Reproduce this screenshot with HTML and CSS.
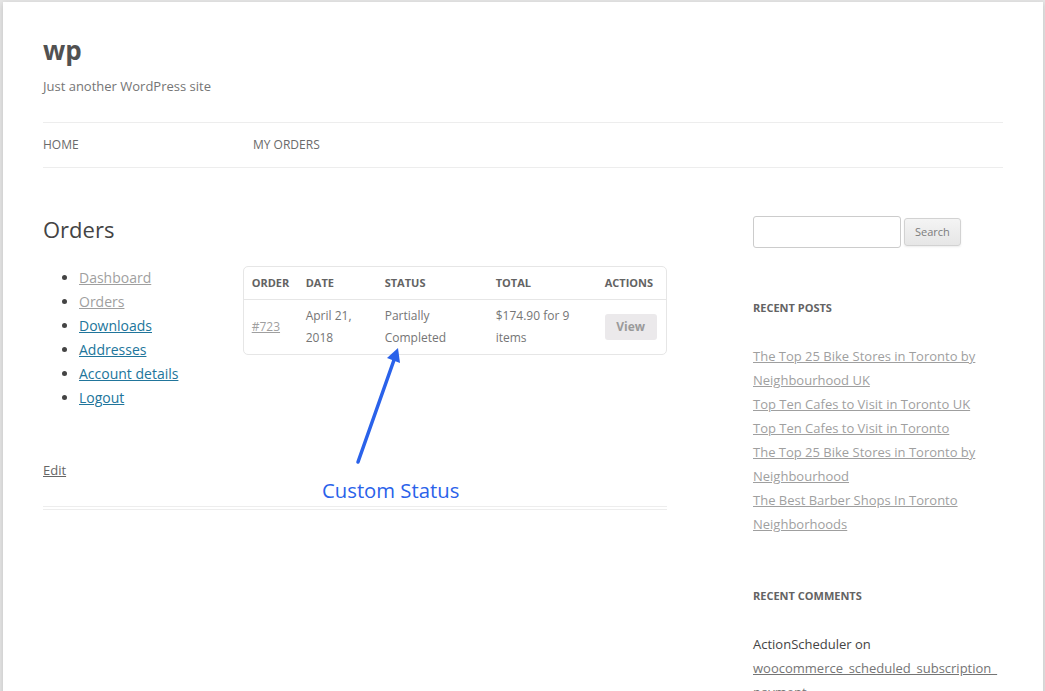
FILE: index.html
```html
<!DOCTYPE html>
<html lang="en">
<head>
<meta charset="utf-8">
<title>Orders – wp</title>
<link rel="stylesheet" href="styles.css">
</head>
<body>
<div class="site">
  <header class="site-header">
    <h1 class="site-title"><a href="#">wp</a></h1>
    <h2 class="site-description">Just another WordPress site</h2>
    <nav class="main-nav">
      <ul class="menu">
        <li class="menu-item menu-item-home"><a href="#">Home</a></li>
        <li class="menu-item"><a href="#">My Orders</a></li>
      </ul>
    </nav>
  </header>

  <div class="site-main">
    <main class="site-content">
      <article class="page">
        <h1 class="entry-title">Orders</h1>
        <div class="entry-content">
          <div class="account">
            <nav class="account-nav">
              <ul>
                <li><a class="visited" href="#">Dashboard</a></li>
                <li><a class="visited" href="#">Orders</a></li>
                <li><a href="#">Downloads</a></li>
                <li><a href="#">Addresses</a></li>
                <li><a href="#">Account details</a></li>
                <li><a href="#">Logout</a></li>
              </ul>
            </nav>
            <div class="account-content">
              <table class="orders-table">
                <colgroup>
                  <col class="col-order">
                  <col class="col-date">
                  <col class="col-status">
                  <col class="col-total">
                  <col class="col-actions">
                </colgroup>
                <thead>
                  <tr>
                    <th>Order</th>
                    <th>Date</th>
                    <th>Status</th>
                    <th>Total</th>
                    <th>Actions</th>
                  </tr>
                </thead>
                <tbody>
                  <tr>
                    <td><a class="visited" href="#">#723</a></td>
                    <td>April 21, 2018</td>
                    <td>Partially Completed</td>
                    <td>$174.90 for 9 items</td>
                    <td><a class="button" href="#">View</a></td>
                  </tr>
                </tbody>
              </table>
            </div>
          </div>
        </div>
        <footer class="entry-meta">
          <a class="edit-link" href="#">Edit</a>
        </footer>

        <div class="callout">
          <svg class="callout-arrow" width="80" height="130" viewBox="0 0 80 130">
            <line x1="18" y1="122" x2="54" y2="20" stroke="#2a62ea" stroke-width="3.5" stroke-linecap="round"/>
            <polygon points="58,8 60,23 47,18" fill="#2a62ea"/>
          </svg>
          <span class="callout-label">Custom Status</span>
        </div>
      </article>
    </main>

    <aside class="widget-area">
      <section class="widget widget-search">
        <form class="search-form">
          <input class="search-field" type="text" aria-label="Search for">
          <button class="search-submit" type="button">Search</button>
        </form>
      </section>

      <section class="widget">
        <h3 class="widget-title">Recent Posts</h3>
        <ul class="widget-list">
          <li><a href="#">The Top 25 Bike Stores in Toronto by Neighbourhood UK</a></li>
          <li><a href="#">Top Ten Cafes to Visit in Toronto UK</a></li>
          <li><a href="#">Top Ten Cafes to Visit in Toronto</a></li>
          <li><a href="#">The Top 25 Bike Stores in Toronto by Neighbourhood</a></li>
          <li><a href="#">The Best Barber Shops In Toronto Neighborhoods</a></li>
        </ul>
      </section>

      <section class="widget">
        <h3 class="widget-title">Recent Comments</h3>
        <ul class="widget-list comments">
          <li>ActionScheduler on <a class="comment-link" href="#">woocommerce_scheduled_subscription_<wbr>payment</a></li>
        </ul>
      </section>
    </aside>
  </div>
</div>
</body>
</html>
```

FILE: styles.css
```css
html, body {
  margin: 0;
  padding: 0;
}

body {
  background: #e6e6e6;
  font-family: "Open Sans", "Liberation Sans", sans-serif;
  font-size: 14px;
  line-height: 24px;
  color: #444;
  overflow: hidden;
  height: 691px;
}

a {
  color: #21759b;
}

ul {
  margin: 0;
  padding: 0;
}

/* Page sheet */
.site {
  background: #fff;
  margin: 2px 2px 0 3px;
  padding: 0 40px;
  min-height: 700px;
  box-shadow: 0 2px 6px rgba(100, 100, 100, 0.3);
}

/* Header */
.site-header {
  padding: 24px 0;
}

.site-title {
  margin: 0;
  font-size: 26px;
  line-height: 48px;
  font-weight: bold;
}

.site-title a {
  color: #515151;
  text-decoration: none;
}

.site-description {
  margin: 0;
  font-size: 13px;
  line-height: 24px;
  font-weight: normal;
  color: #757575;
}

.main-nav {
  margin-top: 24px;
}

.menu {
  list-style: none;
  display: flex;
  border-top: 1px solid #ededed;
  border-bottom: 1px solid #ededed;
}

.menu-item {
  font-size: 12px;
  line-height: 44px;
}

.menu-item-home {
  width: 210px;
}

.menu-item a {
  color: #6a6a6a;
  text-decoration: none;
  text-transform: uppercase;
}

/* Main area */
.site-main {
  display: flex;
  justify-content: space-between;
  align-items: flex-start;
  margin-top: 24px;
}

.site-content {
  width: 624px;
}

.page {
  position: relative;
  padding-bottom: 24px;
  border-bottom: 4px double #ededed;
}

.entry-title {
  margin: 0 0 22px;
  font-size: 22px;
  line-height: 26px;
  font-weight: normal;
  color: #444;
}

/* Account area */
.account {
  display: flex;
  justify-content: space-between;
  align-items: flex-start;
}

.account-nav {
  width: 30%;
  padding-top: 2px;
}

.account-nav ul {
  list-style: disc outside;
  margin: 0 0 24px;
}

.account-nav li {
  margin-left: 36px;
}

.account-nav a.visited,
.orders-table a.visited {
  color: #9f9f9f;
}

.account-content {
  width: 68%;
  padding-top: 2px;
}

.orders-table {
  width: 100%;
  table-layout: fixed;
  border: 1px solid #e6e6e6;
  border-collapse: separate;
  border-spacing: 0;
  border-radius: 5px;
  font-size: 12px;
  color: #757575;
  text-align: left;
}

.col-order { width: 54px; }
.col-date { width: 79px; }
.col-status { width: 111px; }
.col-total { width: 109px; }

.orders-table th {
  padding: 8px;
  font-size: 11px;
  line-height: 16px;
  font-weight: bold;
  text-transform: uppercase;
  color: #636363;
}

.orders-table td {
  padding: 5px 8px;
  line-height: 22px;
  border-top: 1px solid #e6e6e6;
  vertical-align: middle;
}

.button {
  display: inline-block;
  width: 52px;
  box-sizing: border-box;
  text-align: center;
  font-weight: bold;
  font-size: 12px;
  line-height: 26px;
  color: #9a9a9a;
  background: #ebe9eb;
  border-radius: 3px;
  text-decoration: none;
}

.entry-meta {
  margin-top: 24px;
  font-size: 13px;
  line-height: 24px;
  color: #757575;
}

.edit-link {
  color: #666;
}

/* Annotation over the table */
.callout-arrow {
  position: absolute;
  left: 297px;
  top: 124px;
}

.callout-label {
  position: absolute;
  left: 279px;
  top: 260px;
  font-size: 20.3px;
  line-height: 28px;
  color: #2a62ea;
  white-space: nowrap;
}

/* Sidebar */
.widget-area {
  width: 250px;
}

.widget {
  margin-bottom: 48px;
  font-size: 13px;
  line-height: 24px;
}

.search-form {
  display: flex;
  align-items: center;
  gap: 3px;
}

.search-field {
  width: 148px;
  height: 32px;
  box-sizing: border-box;
  border: 1px solid #ccc;
  border-radius: 3px;
  padding: 6px;
  font-family: inherit;
}

.search-submit {
  height: 28px;
  box-sizing: border-box;
  padding: 0 10px;
  font-family: inherit;
  font-size: 11px;
  line-height: 16px;
  color: #7c7c7c;
  background: linear-gradient(to bottom, #f4f4f4, #e6e6e6);
  border: 1px solid #d2d2d2;
  border-radius: 3px;
  box-shadow: 0 1px 2px rgba(64, 64, 64, 0.1);
}

.widget-title {
  margin: 0 0 24px;
  font-size: 11px;
  line-height: 24px;
  font-weight: bold;
  text-transform: uppercase;
  color: #636363;
}

.widget-list {
  list-style: none;
}

.widget-list a {
  color: #9f9f9f;
}

.widget-list .comment-link {
  color: #757575;
}
```
